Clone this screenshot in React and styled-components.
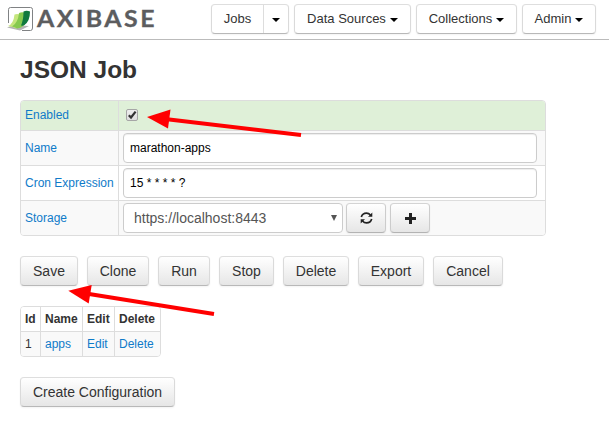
import React from "react";
import styled, { createGlobalStyle, css } from "styled-components";

const GlobalStyle = createGlobalStyle`
  * { box-sizing: border-box; }
  body {
    margin: 0;
    background: #fff;
    color: #333;
    font: 14px/20px "Liberation Sans", Arial, sans-serif;
  }
`;

const Page = styled.div`
  position: relative;
  width: 609px;
  height: 421px;
  overflow: hidden;
`;

const Navbar = styled.header`
  display: flex;
  align-items: flex-start;
  height: 40px;
  padding: 4px 0 0 7px;
  border-bottom: 1px solid #bbb;
`;

const Brand = styled.div`
  display: flex;
  width: 204px;
  height: 30px;
  svg { display: block; margin-top: 2px; flex: none; }
`;

const Wordmark = styled.span`
  margin-left: 3px;
  font: 700 22px/30px Lato, sans-serif;
  letter-spacing: 2.2px;
  color: #5c5d5f;
  -webkit-text-stroke: 0.3px #5c5d5f;
  transform: scaleX(1.13);
  transform-origin: left;
`;

const Nav = styled.nav`
  display: flex;
  gap: 5px;
`;

const buttonFrame = css`
  height: 30px;
  border: 1px solid #ddd;
  border-color: #dedede #dadada #b8b8b8;
  border-radius: 4px;
  box-shadow: 0 1px 2px rgba(0, 0, 0, 0.05);
  color: #333;
  font: 14px/20px "Liberation Sans", Arial, sans-serif;
`;

const NavButton = styled.button`
  ${buttonFrame}
  display: flex;
  align-items: center;
  justify-content: center;
  width: ${(p) => p.$width}px;
  padding: 0;
  background: #fff;
  font-size: 13px;
`;

const SplitButton = styled.div`
  ${buttonFrame}
  display: flex;
  width: 78px;
  background: #fff;
  font-size: 13px;
`;

const SplitPart = styled.button`
  display: flex;
  align-items: center;
  justify-content: center;
  width: ${(p) => p.$width}px;
  padding: 0;
  border: 0;
  border-left: ${(p) => (p.$divided ? "1px solid #ddd" : "0")};
  background: none;
  color: inherit;
  font: inherit;
`;

const Caret = styled.span`
  width: 8px;
  height: 4px;
  margin: 1px 0 0 ${(p) => (p.$gap ? 4 : 0)}px;
  border: 4px solid transparent;
  border-top-color: #000;
  border-bottom: 0;
`;

const Content = styled.main`
  padding: 0 20px;
`;

const Title = styled.h3`
  margin: 10px 0;
  font-size: 24.5px;
  line-height: 40px;
`;

const Form = styled.div`
  width: 526px;
  border: 1px solid #ddd;
  border-radius: 4px;
  overflow: hidden;
  font-size: 12px;
`;

const FormRow = styled.div`
  display: grid;
  grid-template-columns: 97px 1fr;
  height: ${(p) => p.$height || 35}px;
  border-top: ${(p) => (p.$first ? "0" : "1px solid #ddd")};
  background: ${(p) => p.$background || "#f9f9f9"};
`;

const Label = styled.div`
  display: flex;
  align-items: center;
  padding: 0 0 ${(p) => (p.$raised ? 2 : 0)}px 4px;
  color: #0f7bc9;
  white-space: nowrap;
`;

const Field = styled.div`
  display: flex;
  align-items: center;
  padding: 0 8px ${(p) => (p.$raised ? 1 : 0)}px 4px;
  border-left: 1px solid #ddd;
`;

const TextInput = styled.input`
  width: 414px;
  height: 30px;
  padding: 4px 6px;
  border: 1px solid #ccc;
  border-radius: 4px;
  box-shadow: inset 0 1px 1px rgba(0, 0, 0, 0.075);
  background: #fff;
  color: #000;
  font: 12px/20px "Liberation Sans", Arial, sans-serif;
`;

const Checkbox = styled.span`
  display: flex;
  width: 12px;
  height: 12px;
  margin-left: 3px;
  border: 1px solid #a6a6a6;
  border-radius: 2px;
  background: linear-gradient(#ededed, #dedede);
  svg { display: block; overflow: visible; }
`;

const SelectBox = styled.div`
  display: flex;
  align-items: center;
  justify-content: space-between;
  width: 220px;
  height: 30px;
  margin-right: 3px;
  padding: 0 5px 0 10px;
  border: 1px solid #ccc;
  border-radius: 4px;
  background: #fff;
  color: #555;
  font-size: 14px;
  svg { margin-top: -1px; }
`;

const Button = styled.button`
  ${buttonFrame}
  display: flex;
  align-items: center;
  justify-content: center;
  width: ${(p) => p.$width}px;
  padding: 0;
  background: linear-gradient(#fff, #e6e6e6);
`;

const IconButton = styled(Button)`
  margin-right: 4px;
  border-color: #d4d4d4 #ccc #b3b3b3;
`;

const Actions = styled.div`
  display: flex;
  gap: 9px;
  margin: 20px 0;
`;

const Table = styled.div`
  display: grid;
  grid-template-columns: 19px 42px 32px 46px;
  width: 141px;
  margin-bottom: 20px;
  border: 1px solid #ddd;
  border-radius: 4px;
  overflow: hidden;
  font-size: 12px;
`;

const Cell = styled.div`
  height: ${(p) => (p.$head ? 24 : 25)}px;
  padding: 2px 0 0 4px;
  border-left: ${(p) => (p.$first ? "0" : "1px solid #ddd")};
  border-top: ${(p) => (p.$head ? "0" : "1px solid #ddd")};
  background: ${(p) => (p.$head ? "#fff" : "#f9f9f9")};
  color: ${(p) => (p.$link ? "#0f7bc9" : "#333")};
  font-weight: ${(p) => (p.$head ? 700 : 400)};
`;

const Annotations = styled.svg`
  position: absolute;
  top: 0;
  left: 0;
  pointer-events: none;
`;

const Logo = () => (
  <svg width="27" height="27" viewBox="0 0 27 27">
    <path d="M1.5 17V3.5Q1.5 1.5 3.5 1.5H23.5Q25.5 1.5 25.5 3.5V22Q25.5 24.5 23.5 24.5H15" fill="none" stroke="#808284" />
    <path d="M0 21.5L7 19L22 20L13 24.5Z" fill="#b4b4b4" />
    <path d="M1 20Q6.500 18 7.500 8.500Q10 7.500 13 8.500L14 20L9 22.500Q6 20.500 1 20Z" fill="#c5e67d" />
    <path d="M5 20.500Q11 17 12 7Q15 5.500 19 7L18 18Q15 22 10 22.500Q8 21 5 20.500Z" fill="#86c94f" />
    <path d="M14 19.500Q16.500 14 16.500 5.500Q19.500 4 23 5.500Q23 15 17.500 19Q16 20 14 19.500Z" fill="#10793f" />
  </svg>
);

const RefreshIcon = () => (
  <svg width="13" height="12" viewBox="0 0 13 12" fill="#222">
    <path d="M1.300 5Q2.500 1.100 6.500 1.100Q8.800 1.100 10.500 3M11.700 7Q10.500 10.900 6.500 10.900Q4.200 10.900 2.500 9" fill="none" stroke="#222" strokeWidth="1.700" />
    <path d="M12.300 0.500V4.800H8ZM0.700 11.500V7.200H5Z" />
  </svg>
);

const PlusIcon = () => (
  <svg width="11" height="11" viewBox="0 0 11 11">
    <path d="M4 0H7V4H11V7H7V11H4V7H0V4H4Z" fill="#222" />
  </svg>
);

const actions = [
  ["Save", 58], ["Clone", 62], ["Run", 52], ["Stop", 55],
  ["Delete", 66], ["Export", 66], ["Cancel", 70],
];

const menus = [["Data Sources", 117], ["Collections", 101], ["Admin", 74]];

export default function App() {
  return (
    <Page>
      <GlobalStyle />
      <Navbar>
        <Brand><Logo /><Wordmark>AXIBASE</Wordmark></Brand>
        <Nav>
          <SplitButton>
            <SplitPart $width={51}>Jobs</SplitPart>
            <SplitPart $width={25} $divided><Caret /></SplitPart>
          </SplitButton>
          {menus.map(([name, width]) => (
            <NavButton key={name} $width={width}>{name}<Caret $gap /></NavButton>
          ))}
        </Nav>
      </Navbar>
      <Content>
        <Title>JSON Job</Title>
        <Form>
          <FormRow $first $height={29} $background="#dff0d8">
            <Label $raised>Enabled</Label>
            <Field $raised>
              <Checkbox role="checkbox" aria-checked="true">
                <svg width="10" height="10" viewBox="0 0 10 10">
                  <path d="M1.8 5.2L4 7.5L8.6 1.6" fill="none" stroke="#333" strokeWidth="2.2" />
                </svg>
              </Checkbox>
            </Field>
          </FormRow>
          <FormRow>
            <Label>Name</Label>
            <Field><TextInput defaultValue="marathon-apps" /></Field>
          </FormRow>
          <FormRow $background="#fff">
            <Label>Cron Expression</Label>
            <Field><TextInput defaultValue="15 * * * * ?" /></Field>
          </FormRow>
          <FormRow>
            <Label>Storage</Label>
            <Field>
              <SelectBox>
                https://localhost:8443
                <svg width="6" height="6" viewBox="0 0 6 6"><path d="M0 0H6L3 6Z" fill="#555" /></svg>
              </SelectBox>
              <IconButton $width={40} aria-label="Refresh"><RefreshIcon /></IconButton>
              <IconButton $width={40} aria-label="Add"><PlusIcon /></IconButton>
            </Field>
          </FormRow>
        </Form>
        <Actions>
          {actions.map(([name, width]) => <Button key={name} $width={width}>{name}</Button>)}
        </Actions>
        <Table>
          <Cell $head $first>Id</Cell>
          <Cell $head>Name</Cell>
          <Cell $head>Edit</Cell>
          <Cell $head>Delete</Cell>
          <Cell $first>1</Cell>
          <Cell $link>apps</Cell>
          <Cell $link>Edit</Cell>
          <Cell $link>Delete</Cell>
        </Table>
        <Button $width={155}>Create Configuration</Button>
      </Content>
      <Annotations width="609" height="421" fill="#f00" stroke="#f00">
        <path d="M165 119L301 135" strokeWidth="4" />
        <path d="M147 117L170.5 109.5L168 128.5Z" stroke="none" />
        <path d="M86 293.5L214 314" strokeWidth="4" />
        <path d="M68.3 290.7L91.7 285L88.7 303.5Z" stroke="none" />
      </Annotations>
    </Page>
  );
}
